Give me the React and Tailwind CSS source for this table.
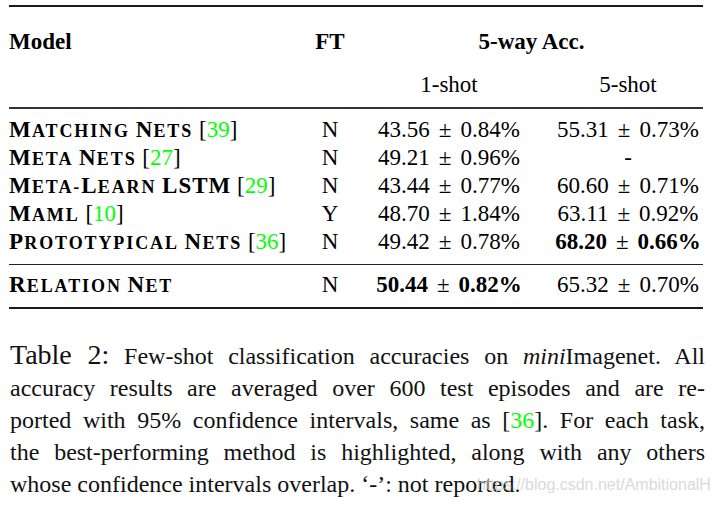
import React from "react";

const G = ({ children }) => <span className="text-[#00ff00]">{children}</span>;

function SC({ text }) {
  // manual bold small caps: initial capitals at full size, rest in smaller capitals
  const words = text.split(" ");
  return (
    <span className="font-bold">
      {words.map((w, wi) => {
        const parts = [];
        let buf = "";
        let bufBig = null;
        for (const ch of w) {
          const isBig = ch === ch.toUpperCase() && ch !== ch.toLowerCase();
          if (bufBig === null || isBig === bufBig) {
            buf += ch;
            bufBig = isBig;
          } else {
            parts.push([buf, bufBig]);
            buf = ch;
            bufBig = isBig;
          }
        }
        if (buf) parts.push([buf, bufBig]);
        return (
          <React.Fragment key={wi}>
            {wi > 0 ? " " : null}
            {parts.map(([t, big], pi) =>
              big ? (
                <span key={pi} className="tracking-[1.2px]">{t}</span>
              ) : (
                <span key={pi} className="text-[18px] uppercase tracking-[1.9px]">{t}</span>
              )
            )}
          </React.Fragment>
        );
      })}
    </span>
  );
}

function Name({ text, cite }) {
  return (
    <span>
      <SC text={text} />{" "}
      <span className="font-normal">[<G>{cite}</G>]</span>
    </span>
  );
}

function Num({ a, b, bold }) {
  return (
    <span className={bold ? "font-bold" : ""}>
      {a}
      <span className="font-normal mx-[9px]">±</span>
      {b}%
    </span>
  );
}

function Row({ name, ft, one, five }) {
  return (
    <div className="grid grid-cols-[291px_60px_178px_165px] h-[28px] leading-[28px]">
      <div className="whitespace-nowrap">{name}</div>
      <div className="text-center">{ft}</div>
      <div className="text-center whitespace-nowrap">{one}</div>
      <div className="text-center pl-[15px] whitespace-nowrap">{five}</div>
    </div>
  );
}

export default function App() {
  const lines = [
    <>
      <span className="text-[28px]">Table 2:</span> Few-shot classification accuracies on <i>mini</i>Imagenet. All
    </>,
    <>accuracy results are averaged over 600 test episodes and are re-</>,
    <>
      ported with 95% confidence intervals, same as [<G>36</G>]. For each task,
    </>,
    <>the best-performing method is highlighted, along with any others</>,
  ];
  return (
    <div className="w-[716px] h-[511px] bg-white text-black relative overflow-hidden font-['Liberation_Serif',serif]">
      <div className="pl-[9px] pt-[5px] w-[703px] text-[23px]">
        <div className="h-[2px] bg-[#1a1a1a]" />
        <div className="mt-[21px] grid grid-cols-[291px_60px_343px] h-[28px] leading-[28px] font-bold">
          <div>Model</div>
          <div className="text-center">FT</div>
          <div className="text-center">5-way Acc.</div>
        </div>
        <div className="mt-[15px] grid grid-cols-[291px_60px_178px_165px] h-[28px] leading-[28px]">
          <div />
          <div />
          <div className="text-center">1-shot</div>
          <div className="text-center pl-[15px]">5-shot</div>
        </div>
        <div className="mt-[8px] h-[1.5px] bg-[#333]" />
        <div className="mt-[7px]">
          <Row name={<Name text="Matching Nets" cite="39" />} ft="N" one={<Num a="43.56" b="0.84" />} five={<Num a="55.31" b="0.73" />} />
          <Row name={<Name text="Meta Nets" cite="27" />} ft="N" one={<Num a="49.21" b="0.96" />} five="-" />
          <Row
            name={
              <span>
                <SC text="Meta-Learn" /> <span className="font-bold tracking-[1px]">LSTM</span>{" "}
                <span className="font-normal">[<G>29</G>]</span>
              </span>
            }
            ft="N"
            one={<Num a="43.44" b="0.77" />}
            five={<Num a="60.60" b="0.71" />}
          />
          <Row name={<Name text="Maml" cite="10" />} ft="Y" one={<Num a="48.70" b="1.84" />} five={<Num a="63.11" b="0.92" />} />
          <Row name={<Name text="Prototypical Nets" cite="36" />} ft="N" one={<Num a="49.42" b="0.78" />} five={<Num a="68.20" b="0.66" bold />} />
        </div>
        <div className="mt-[8px] h-[1.5px] bg-[#222]" />
        <div className="mt-[6px]">
          <Row
            name={<SC text="Relation Net" />}
            ft="N"
            one={<Num a="50.44" b="0.82" bold />}
            five={<Num a="65.32" b="0.70" />}
          />
        </div>
        <div className="mt-[8px] h-[2px] bg-[#1a1a1a]" />
      </div>
      <div className="pl-[10px] w-[705px] mt-[30px] text-[24px] leading-[32px] text-[#111]">
        {lines.map((l, i) => (
          <div key={i} className="text-justify [text-align-last:justify] whitespace-nowrap">
            {l}
          </div>
        ))}
        <div>whose confidence intervals overlap. ‘-’: not reported.</div>
      </div>
      <div className="absolute left-[477px] top-[475px] text-[16px] leading-[20px] font-['Liberation_Sans',sans-serif] text-[#cfcfcf]/80">
        https://blog.csdn.net/AmbitionalH
      </div>
    </div>
  );
}
